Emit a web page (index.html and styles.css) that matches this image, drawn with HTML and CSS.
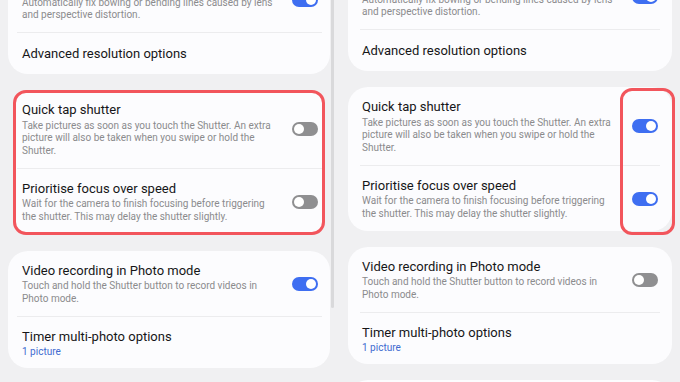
FILE: index.html
```html
<!DOCTYPE html>
<html lang="en">
<head>
<meta charset="utf-8">
<title>Camera settings</title>
<link rel="stylesheet" href="styles.css">
</head>
<body>
<div class="screen">
  <section class="panel panel-left">
    <div class="column column-left">
      <div class="card">
        <div class="row">
          <div class="text">
            <div class="title">Auto lens distortion correction</div>
            <div class="desc">Automatically fix bowing or bending lines caused by lens and perspective distortion.</div>
          </div>
          <span class="toggle on"></span>
        </div>
        <div class="divider"></div>
        <div class="row single">
          <div class="text"><div class="title">Advanced resolution options</div></div>
        </div>
      </div>

      <div class="card card-marked">
        <div class="row">
          <div class="text">
            <div class="title">Quick tap shutter</div>
            <div class="desc">Take pictures as soon as you touch the Shutter. An extra picture will also be taken when you swipe or hold the Shutter.</div>
          </div>
          <span class="toggle"></span>
        </div>
        <div class="divider"></div>
        <div class="row">
          <div class="text">
            <div class="title">Prioritise focus over speed</div>
            <div class="desc">Wait for the camera to finish focusing before triggering the shutter. This may delay the shutter slightly.</div>
          </div>
          <span class="toggle"></span>
        </div>
      </div>

      <div class="card">
        <div class="row">
          <div class="text">
            <div class="title">Video recording in Photo mode</div>
            <div class="desc">Touch and hold the Shutter button to record videos in Photo mode.</div>
          </div>
          <span class="toggle on"></span>
        </div>
        <div class="divider"></div>
        <div class="row">
          <div class="text">
            <div class="title">Timer multi-photo options</div>
            <div class="sub">1 picture</div>
          </div>
        </div>
      </div>
    </div>
    <div class="scrollbar"></div>
  </section>

  <section class="panel panel-right">
    <div class="column column-right">
      <div class="card">
        <div class="row">
          <div class="text">
            <div class="title">Auto lens distortion correction</div>
            <div class="desc">Automatically fix bowing or bending lines caused by lens and perspective distortion.</div>
          </div>
          <span class="toggle on"></span>
        </div>
        <div class="divider"></div>
        <div class="row single">
          <div class="text"><div class="title">Advanced resolution options</div></div>
        </div>
      </div>

      <div class="card card-highlight">
        <div class="row">
          <div class="text">
            <div class="title">Quick tap shutter</div>
            <div class="desc">Take pictures as soon as you touch the Shutter. An extra picture will also be taken when you swipe or hold the Shutter.</div>
          </div>
          <span class="toggle on"></span>
        </div>
        <div class="divider"></div>
        <div class="row">
          <div class="text">
            <div class="title">Prioritise focus over speed</div>
            <div class="desc">Wait for the camera to finish focusing before triggering the shutter. This may delay the shutter slightly.</div>
          </div>
          <span class="toggle on"></span>
        </div>
        <div class="mark"></div>
      </div>

      <div class="card">
        <div class="row">
          <div class="text">
            <div class="title">Video recording in Photo mode</div>
            <div class="desc">Touch and hold the Shutter button to record videos in Photo mode.</div>
          </div>
          <span class="toggle"></span>
        </div>
        <div class="divider"></div>
        <div class="row">
          <div class="text">
            <div class="title">Timer multi-photo options</div>
            <div class="sub">1 picture</div>
          </div>
        </div>
      </div>

      <div class="card">
        <div class="row single">
          <div class="text"><div class="title">More</div></div>
        </div>
      </div>
    </div>
  </section>
</div>
</body>
</html>
```

FILE: styles.css
```css
* { box-sizing: border-box; }

html, body {
  margin: 0;
  padding: 0;
  background: #f0f0f2;
}

body {
  font-family: Roboto, "Noto Sans", sans-serif;
  width: 680px;
  height: 382px;
  overflow: hidden;
}

.screen {
  display: flex;
  width: 680px;
  height: 382px;
  overflow: hidden;
}

.panel {
  display: flex;
  align-items: flex-start;
}

.panel-left {
  width: 340px;
  flex: none;
}

.panel-right {
  flex: 1;
  padding: 0 8px;
}

.column {
  display: flex;
  flex-direction: column;
  gap: 16px;
}

.column-left {
  width: 322px;
  margin-left: 8px;
  margin-top: -33px;
}

.column-right {
  width: 100%;
  margin-top: -36px;
}

.scrollbar {
  width: 3px;
  height: 308px;
  margin-left: 1px;
  background: #d9d9db;
  border-radius: 0 0 2px 2px;
}

.card {
  background: #fcfcfe;
  border-radius: 20px;
  position: relative;
}

.row {
  display: flex;
  align-items: center;
  padding: 11px 12px 10px 14px;
}

.row.single {
  padding-top: 12px;
  padding-bottom: 12px;
}

.panel-right .row {
  padding-right: 14px;
}

.text {
  flex: 1;
  min-width: 0;
}

.title {
  font-size: 13px;
  line-height: 17px;
  color: #161618;
}

.desc {
  font-size: 10px;
  line-height: 12.75px;
  color: #8b8b8d;
  margin-top: 1.5px;
}

.sub {
  font-size: 10px;
  line-height: 13px;
  color: #3f6bd0;
}

.divider {
  height: 1px;
  background: #ececee;
  margin: 0 8px 0 9px;
}

.panel-right .divider {
  margin: 0 12px;
}

.toggle {
  flex: none;
  width: 26px;
  height: 14px;
  border-radius: 7px;
  background: #8f8f91;
  margin-left: 12px;
  position: relative;
}

.toggle::after {
  content: "";
  position: absolute;
  top: 2px;
  left: 2px;
  width: 10px;
  height: 10px;
  border-radius: 50%;
  background: #ffffff;
}

.toggle.on {
  background: #3e6ef1;
}

.toggle.on::after {
  left: 14px;
}

/* left annotated card: red outline drawn as the card border */
.card-marked {
  margin: 0 5px;
  border: 3px solid #f2555c;
  border-radius: 13px;
}

.card-marked .row {
  padding-left: 6px;
  padding-right: 4px;
}

.card-marked .row:first-child {
  padding-top: 8px;
}

.card-marked .row:last-child {
  padding-bottom: 8px;
}

.card-marked .divider {
  margin: 0 0 0 1px;
}

/* right annotated card: red box over the toggles */
.mark {
  position: absolute;
  top: 1px;
  right: -3px;
  bottom: -4px;
  width: 55px;
  border: 3px solid #f2555c;
  border-radius: 12px;
}
```
